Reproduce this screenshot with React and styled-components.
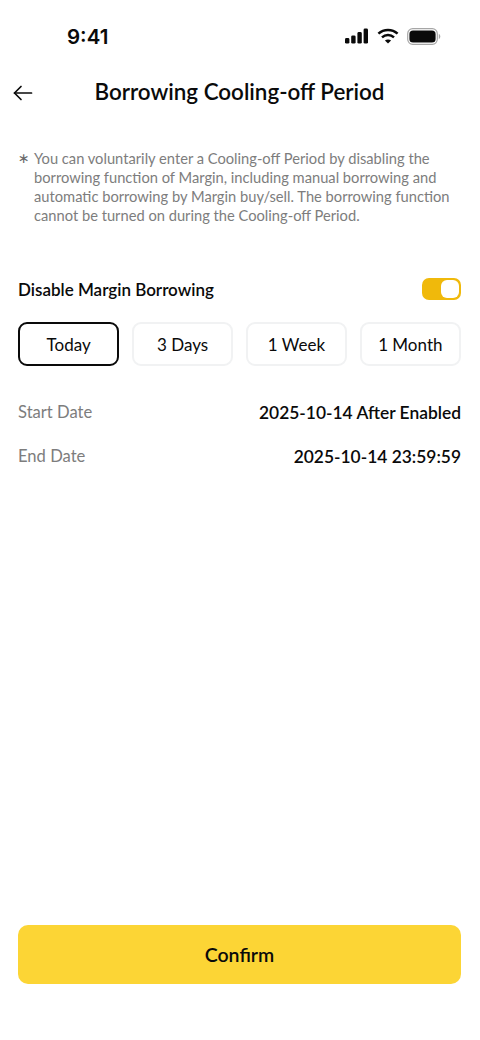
import styled, { createGlobalStyle } from "styled-components";

const GlobalStyle = createGlobalStyle`
  html, body {
    margin: 0;
    padding: 0;
    background: #fff;
  }
  * {
    box-sizing: border-box;
  }
`;

const periods = ["Today", "3 Days", "1 Week", "1 Month"];

const SignalIcon = () => (
  <svg width="24" height="16" viewBox="0 0 24 16" fill="#0a0a0a">
    <rect x="0" y="10" width="4.4" height="5.6" rx="1.4" />
    <rect x="6.2" y="7.4" width="4.4" height="8.2" rx="1.4" />
    <rect x="12.4" y="4" width="4.4" height="11.6" rx="1.4" />
    <rect x="18.6" y="0.6" width="4.4" height="15" rx="1.4" />
  </svg>
);

const WifiIcon = () => (
  <svg width="22" height="16" viewBox="0 0 22 16" fill="none" stroke="#0a0a0a" strokeWidth="2.5">
    <path d="M1.4 5.6C6.8 .7 15.2 .7 20.6 5.6" />
    <path d="M5 9.3c3.4-3.1 8.6-3.1 12 0" />
    <path d="M11 15.6 7.9 12.5c1.8-1.5 4.4-1.5 6.2 0L11 15.6Z" fill="#0a0a0a" stroke="none" />
  </svg>
);

const BatteryIcon = () => (
  <svg width="34" height="17" viewBox="0 0 34 17" fill="none">
    <rect x="0.7" y="0.7" width="29.6" height="15.6" rx="5" stroke="#a6a6a6" strokeWidth="1.2" />
    <rect x="2.4" y="2.4" width="26.2" height="12.2" rx="3.6" fill="#0a0a0a" />
    <path d="M31.8 6v5c.9-.3 1.5-1.4 1.5-2.5S32.7 6.300 31.800 6Z" fill="#a6a6a6" />
  </svg>
);

const BackIcon = () => (
  <svg width="20" height="16" viewBox="0 0 20 16" fill="none" stroke="#0a0a0a" strokeWidth="1.7" strokeLinecap="round" strokeLinejoin="round">
    <path d="M1.500 8h17" />
    <path d="M8 1.500 1.500 8 8 14.500" />
  </svg>
);

export default function App() {
  return (
    <>
      <GlobalStyle />
      <Page>
        <StatusBar>
          <Clock>9:41</Clock>
          <StatusIcons>
            <SignalIcon />
            <WifiIcon />
            <BatteryIcon />
          </StatusIcons>
        </StatusBar>

        <Header>
          <BackButton aria-label="Back">
            <BackIcon />
          </BackButton>
          <Title>Borrowing Cooling-off Period</Title>
        </Header>

        <Note>
          <Star>∗</Star>
          <NoteText>
            You can voluntarily enter a Cooling-off Period by disabling the
            <br />
            borrowing function of Margin, including manual borrowing and
            <br />
            automatic borrowing by Margin buy/sell. The borrowing function
            <br />
            cannot be turned on during the Cooling-off Period.
          </NoteText>
        </Note>

        <ToggleRow>
          <ToggleLabel>Disable Margin Borrowing</ToggleLabel>
          <Toggle>
            <Knob />
          </Toggle>
        </ToggleRow>

        <Periods>
          {periods.map((p, i) => (
            <PeriodButton key={p} $active={i === 0}>
              {p}
            </PeriodButton>
          ))}
        </Periods>

        <DateList>
          <DateRow>
            <DateLabel>Start Date</DateLabel>
            <DateValue>2025-10-14 After Enabled</DateValue>
          </DateRow>
          <DateRow>
            <DateLabel>End Date</DateLabel>
            <DateValue>2025-10-14 23:59:59</DateValue>
          </DateRow>
        </DateList>

        <ConfirmButton>Confirm</ConfirmButton>
      </Page>
    </>
  );
}

const Page = styled.div`
  width: 480px;
  height: 1040px;
  display: flex;
  flex-direction: column;
  padding: 0 19px 56px 18px;
  background: #fff;
  color: #0a0a0a;
  font-family: "Lato", "Liberation Sans", sans-serif;
  overflow: hidden;
`;

const StatusBar = styled.div`
  height: 72px;
  display: flex;
  align-items: center;
  justify-content: space-between;
  padding: 0 20px 0 49px;
`;

const Clock = styled.span`
  font-family: "Inter", sans-serif;
  font-size: 20.500px;
  font-weight: 600;
`;

const StatusIcons = styled.div`
  display: flex;
  align-items: center;
  gap: 8px;
`;

const Header = styled.div`
  height: 40px;
  display: flex;
  align-items: center;
  justify-content: center;
  position: relative;
`;

const BackButton = styled.button`
  position: absolute;
  left: -5px;
  top: 13px;
  padding: 0;
  border: 0;
  background: none;
  display: flex;
`;

const Title = styled.h1`
  margin: 0;
  font-size: 22.400px;
  font-weight: 600;
  line-height: 40px;
`;

const Note = styled.div`
  display: flex;
  gap: 9px;
  margin-top: 37px;
  color: #7d7d7d;
  font-size: 14.700px;
  line-height: 19px;
`;

const Star = styled.span`
  width: 7px;
  flex: none;
  font-family: "DejaVu Sans", sans-serif;
  font-size: 14px;
  color: #6a6a6a;
`;

const NoteText = styled.p`
  margin: 0;
  white-space: nowrap;
`;

const ToggleRow = styled.div`
  display: flex;
  align-items: center;
  justify-content: space-between;
  margin-top: 52px;
  height: 24px;
`;

const ToggleLabel = styled.span`
  font-size: 17px;
  font-weight: 600;
`;

const Toggle = styled.div`
  width: 39px;
  height: 22px;
  padding: 2px;
  border-radius: 7px;
  background: #f0b90b;
  display: flex;
  justify-content: flex-end;
`;

const Knob = styled.div`
  width: 18px;
  height: 18px;
  border-radius: 6px;
  background: #fff;
`;

const Periods = styled.div`
  display: grid;
  grid-template-columns: repeat(4, 1fr);
  gap: 12.500px;
  margin-top: 21px;
`;

const PeriodButton = styled.button`
  height: 44px;
  padding: 0;
  border-radius: 9px;
  border: ${(p) => (p.$active ? "2px solid #0a0a0a" : "2px solid #f1f2f3")};
  background: #fff;
  color: #0a0a0a;
  font-family: inherit;
  font-size: 17px;
`;

const DateList = styled.div`
  display: flex;
  flex-direction: column;
  gap: 20px;
  margin-top: 34px;
`;

const DateRow = styled.div`
  display: flex;
  align-items: center;
  justify-content: space-between;
  height: 24px;
`;

const DateLabel = styled.span`
  color: #7d7d7d;
  font-size: 16.600px;
`;

const DateValue = styled.span`
  font-size: 17.400px;
  font-weight: 600;
`;

const ConfirmButton = styled.button`
  margin-top: auto;
  height: 59px;
  flex: none;
  border: 0;
  border-radius: 10px;
  background: #fcd535;
  color: #0a0a0a;
  font-family: inherit;
  font-size: 19.500px;
  font-weight: 600;
`;
